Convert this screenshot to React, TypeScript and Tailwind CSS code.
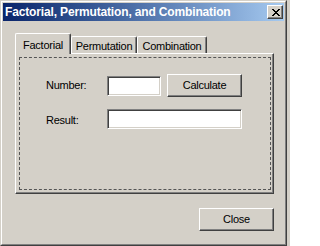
import React from 'react';

const font = { fontFamily: '"Liberation Sans", Arial, sans-serif' };

const CloseGlyph: React.FC = () => (
  <svg width="8" height="7" viewBox="0 0 8 7" shapeRendering="crispEdges">
    <path
      fill="#000"
      d="M0 0h2v1H0zM6 0h2v1H6zM1 1h2v1H1zM5 1h2v1H5zM2 2h4v1H2zM3 3h2v1H3zM2 4h4v1H2zM1 5h2v1H1zM5 5h2v1H5zM0 6h2v1H0zM6 6h2v1H6z"
    />
  </svg>
);

interface TabProps {
  label: string;
  width: string;
  active?: boolean;
}

const Tab: React.FC<TabProps> = ({ label, width, active }) => (
  <div
    className={
      active
        ? `${width} h-[21px] -mb-px z-10 bg-[#d4d0c8] border-l border-t border-r border-white border-r-[#404040] shadow-[inset_-1px_0_0_#808080] rounded-t-[2px] flex justify-center pt-[3px] text-[11px] tracking-[-0.25px] text-black`
        : `${width} h-[17px] bg-[#d4d0c8] border-l border-t border-r border-white border-r-[#404040] shadow-[inset_-1px_0_0_#808080] rounded-t-[2px] flex justify-center pt-[1px] text-[11px] tracking-[-0.25px] text-black`
    }
  >
    {label}
  </div>
);

const Button: React.FC<{ label: string }> = ({ label }) => (
  <button className="w-[75px] h-[23px] bg-[#d4d0c8] border border-white border-r-[#404040] border-b-[#404040] shadow-[inset_-1px_-1px_0_#808080] text-[11px] tracking-[-0.25px] text-black flex items-center justify-center">
    {label}
  </button>
);

const TextBox: React.FC<{ width: string }> = ({ width }) => (
  <div
    className={`${width} h-[20px] bg-white border border-[#808080] border-r-white border-b-white shadow-[inset_1px_1px_0_#404040,inset_-1px_-1px_0_#d4d0c8]`}
  />
);

export default function App() {
  return (
    <div className="w-[290px] h-[246px] bg-[#d4d0c8]" style={font}>
      <div className="w-[287px] h-[246px] border border-[#d4d0c8] border-r-[#404040] border-b-[#404040]">
        <div className="h-full border border-white border-r-[#808080] border-b-[#808080] p-px flex flex-col">
          {/* title bar */}
          <div className="h-[18px] bg-gradient-to-r from-[#0a246a] to-[#a6caf0] flex items-center justify-between pl-[2px] pr-px">
            <span className="text-white font-bold text-[12px] tracking-[-0.15px] leading-none">
              Factorial, Permutation, and Combination
            </span>
            <div className="w-[16px] h-[14px] bg-[#d4d0c8] border border-white border-r-[#404040] border-b-[#404040] shadow-[inset_-1px_-1px_0_#808080] flex items-center justify-center pl-px">
              <CloseGlyph />
            </div>
          </div>

          {/* body */}
          <div className="flex-1 pl-[12px] pt-[12px]">
            <div className="flex items-end">
              <Tab label="Factorial" width="w-[56px]" active />
              <Tab label="Permutation" width="w-[66px]" />
              <Tab label="Combination" width="w-[70px]" />
            </div>
            <div className="w-[259px] h-[141px] border border-white border-r-[#404040] border-b-[#404040] shadow-[inset_-1px_-1px_0_#808080] pl-[3px] pt-[3px] pr-[2px] pb-[3px]">
              <div className="h-full border border-dashed border-[#555]">
                <div className="pl-[26px] pt-[16px] flex flex-col gap-[12px]">
                  <div className="flex items-center">
                    <span className="w-[61px] text-[11px] tracking-[-0.25px] text-black">Number:</span>
                    <TextBox width="w-[54px]" />
                    <div className="ml-[6px]">
                      <Button label="Calculate" />
                    </div>
                  </div>
                  <div className="flex items-center">
                    <span className="w-[61px] mt-[3px] text-[11px] tracking-[-0.25px] text-black">Result:</span>
                    <TextBox width="w-[135px]" />
                  </div>
                </div>
              </div>
            </div>
            <div className="w-[259px] flex justify-end mt-[14px]">
              <Button label="Close" />
            </div>
          </div>
        </div>
      </div>
    </div>
  );
}
